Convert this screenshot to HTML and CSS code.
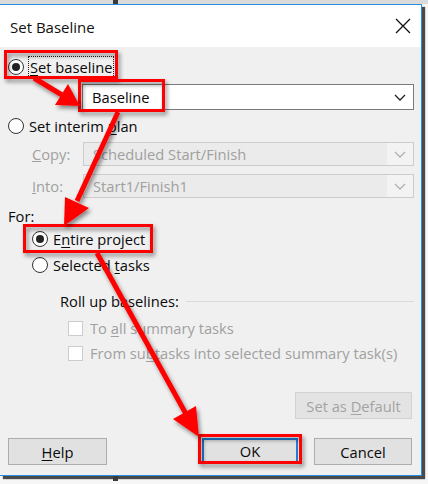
FILE: index.html
```html
<!DOCTYPE html>
<html>
<head>
<meta charset="utf-8">
<title>Set Baseline</title>
<link rel="stylesheet" href="styles.css">
</head>
<body>
<div class="screen">
  <div class="topstrip"><span class="mark"></span></div>
  <div class="dialog">
    <div class="titlebar">
      <span class="title">Set Baseline</span>
      <svg class="close" width="16" height="16" viewBox="0 0 16 16"><path d="M1 1 L15 15 M15 1 L1 15" stroke="#111" stroke-width="1.3" fill="none"/></svg>
    </div>
    <div class="content">
      <div class="row r-setbase"><span class="radio on"></span><span class="label focus"><u>S</u>et baseline</span></div>
      <div class="combo c-base"><span class="ctext">Baseline</span><span class="chev"><svg width="12" height="7" viewBox="0 0 12 7"><path d="M1 1 L6 6 L11 1" stroke="#222" stroke-width="1.3" fill="none"/></svg></span></div>
      <div class="row r-interim"><span class="radio"></span><span class="label">Set interim <u>p</u>lan</span></div>
      <div class="frow r-copy"><span class="flabel"><u>C</u>opy:</span><div class="combo dis"><span class="ctext">Scheduled Start/Finish</span><span class="chev"><svg width="12" height="7" viewBox="0 0 12 7"><path d="M1 1 L6 6 L11 1" stroke="#b0b0b0" stroke-width="1.3" fill="none"/></svg></span></div></div>
      <div class="frow r-into"><span class="flabel"><u>I</u>nto:</span><div class="combo dis"><span class="ctext">Start1/Finish1</span><span class="chev"><svg width="12" height="7" viewBox="0 0 12 7"><path d="M1 1 L6 6 L11 1" stroke="#b0b0b0" stroke-width="1.3" fill="none"/></svg></span></div></div>
      <div class="row r-for"><span class="label">For:</span></div>
      <div class="row ind r-entire"><span class="radio on"></span><span class="label">E<u>n</u>tire project</span></div>
      <div class="row ind r-sel"><span class="radio"></span><span class="label">Selected <u>t</u>asks</span></div>
      <div class="group r-roll"><span class="label">Roll up baselines:</span><span class="gline"></span></div>
      <div class="row chk r-c1"><span class="box"></span><span class="label dim">To <u>a</u>ll summary tasks</span></div>
      <div class="row chk r-c2"><span class="box"></span><span class="label dim">From su<u>b</u>tasks into selected summary task(s)</span></div>
      <div class="defrow"><button class="btn disabled"><span>Set as <u>D</u>efault</span></button></div>
      <div class="btnrow">
        <button class="btn help"><span><u>H</u>elp</span></button>
        <button class="btn ok"><span>OK</span></button>
        <button class="btn cancel"><span>Cancel</span></button>
      </div>
    </div>
  </div>
  <div class="bottomstrip"><span class="mark"></span></div>
  <svg class="annot" width="428" height="484" viewBox="0 0 428 484">
    <defs>
      <filter id="sh" x="-20%" y="-20%" width="140%" height="140%">
        <feDropShadow dx="2" dy="3" stdDeviation="2" flood-color="#000" flood-opacity="0.45"/>
      </filter>
    </defs>
    <g filter="url(#sh)" fill="none" stroke="#ff0000" stroke-width="3">
      <rect x="5.5" y="51.5" width="111" height="26"/>
      <rect x="79.5" y="80.5" width="84" height="30"/>
      <rect x="24.5" y="225.5" width="127" height="26"/>
      <rect x="199.5" y="435.5" width="101" height="27"/>
    </g>
    <g filter="url(#sh)">
      <line x1="34" y1="78" x2="62" y2="95" stroke="#ff0000" stroke-width="5"/>
      <polygon points="55,105 68,84 80,106" fill="#ff0000"/>
      <line x1="118" y1="112" x2="77" y2="201" stroke="#ff0000" stroke-width="5"/>
      <polygon points="65,197 89,208 64,226" fill="#ff0000"/>
      <line x1="97" y1="253" x2="186" y2="414" stroke="#ff0000" stroke-width="5"/>
      <polygon points="173,419 196,406 199,437" fill="#ff0000"/>
    </g>
  </svg>
</div>
</body>
</html>
```

FILE: styles.css
```css
* { box-sizing: border-box; }
html, body { margin: 0; padding: 0; }
body {
  background: #ffffff;
  font-family: "Open Sans", "Noto Sans", sans-serif;
  font-size: 14.7px;
  color: #0a0a0a;
}
.screen {
  position: relative;
  width: 428px;
  height: 484px;
  overflow: hidden;
  background: #f6f6f6;
}
.topstrip {
  height: 4px;
  background: #dadada;
  display: flex;
}
.mark {
  margin-left: 113px;
  width: 5px;
  background: #3a3a3a;
}
.bottomstrip {
  height: 8px;
  display: flex;
}
.bottomstrip .mark { height: 5px; }
.dialog {
  width: 422px;
  height: 472px;
  border-top: 1px solid #2a8be0;
  border-right: 1px solid #2a8be0;
  border-bottom: 1px solid #2a8be0;
  background: #f0f0f0;
  box-shadow: 3px 3px 1px #4a4a4a;
  display: flex;
  flex-direction: column;
}
.titlebar {
  height: 42px;
  background: #fff;
  display: flex;
  align-items: center;
  justify-content: space-between;
  padding: 0 10px 0 10px;
  flex: none;
}
.title { font-size: 15px; color: #111; margin-top: 1px; }
.content {
  flex: 1;
  padding: 0 7px 0 8px;
  display: flex;
  flex-direction: column;
}
.row {
  height: 22px;
  display: flex;
  align-items: center;
  white-space: nowrap;
}
.label { line-height: 20px; }
.label u { text-decoration-thickness: 1px; text-underline-offset: 2px; }
.radio {
  width: 16px;
  height: 16px;
  border: 1px solid #333;
  border-radius: 50%;
  background: #fff;
  margin-right: 5px;
  display: flex;
  align-items: center;
  justify-content: center;
  flex: none;
}
.radio.on::after {
  content: "";
  width: 8px;
  height: 8px;
  border-radius: 50%;
  background: #222;
}
.focus {
  outline: 1px dotted #222;
  outline-offset: 0px;
  padding: 0 1px;
}
.r-setbase { margin-top: 9px; }
.combo {
  height: 26px;
  border: 1px solid #7a7a7a;
  background: #fff;
  display: flex;
  align-items: center;
  justify-content: space-between;
  padding-left: 9px;
}
.c-base { margin-left: 74px; margin-top: 6px; }
.chev { width: 26px; height: 100%; display: flex; align-items: center; justify-content: center; }
.combo.dis {
  flex: 1;
  height: 24px;
  border-color: #cccccc;
  background: #ebebeb;
  color: #a0a0a0;
}
.combo.dis .chev { background: #f3f3f3; }
.r-interim { margin-top: 5px; }
.frow { display: flex; align-items: center; white-space: nowrap; }
.flabel { width: 51px; margin-left: 24px; color: #a0a0a0; }
.r-copy { margin-top: 5px; }
.r-into { margin-top: 8px; }
.r-for { margin-top: 7px; }
.ind { padding-left: 24px; }
.r-entire { margin-top: 1px; }
.r-sel { margin-top: 4px; }
.group {
  height: 22px;
  display: flex;
  align-items: center;
  margin-top: 14px;
  padding-left: 52px;
}
.gline { flex: 1; height: 1px; background: #d9d9d9; margin-left: 7px; }
.chk { padding-left: 60px; }
.box {
  width: 15px;
  height: 15px;
  border: 1px solid #cccccc;
  background: #fff;
  margin-right: 7px;
  flex: none;
}
.dim { color: #a0a0a0; }
.r-c1 { margin-top: 5px; }
.r-c2 { margin-top: 3px; }
.defrow { display: flex; justify-content: flex-end; margin-top: 28px; padding-right: 2px; }
.btn {
  font-family: inherit;
  font-size: 14.7px;
  height: 27px;
  border: 1px solid #adadad;
  background: #e1e1e1;
  color: #0a0a0a;
  padding: 0;
  display: flex;
  align-items: center;
  justify-content: center;
  white-space: nowrap;
}
.btn u { text-underline-offset: 2px; }
.btn.disabled { width: 117px; background: #e3e3e3; border-color: #d2d2d2; color: #a3a3a3; }
.btnrow { display: flex; margin-top: 19px; padding-right: 2px; }
.help { width: 99px; }
.ok { width: 96px; margin-left: 95px; border: 2px solid #1c7fd6; height: 26px; }
.cancel { width: 98px; margin-left: 16px; }
.annot { position: absolute; left: 0; top: 0; pointer-events: none; }
```
